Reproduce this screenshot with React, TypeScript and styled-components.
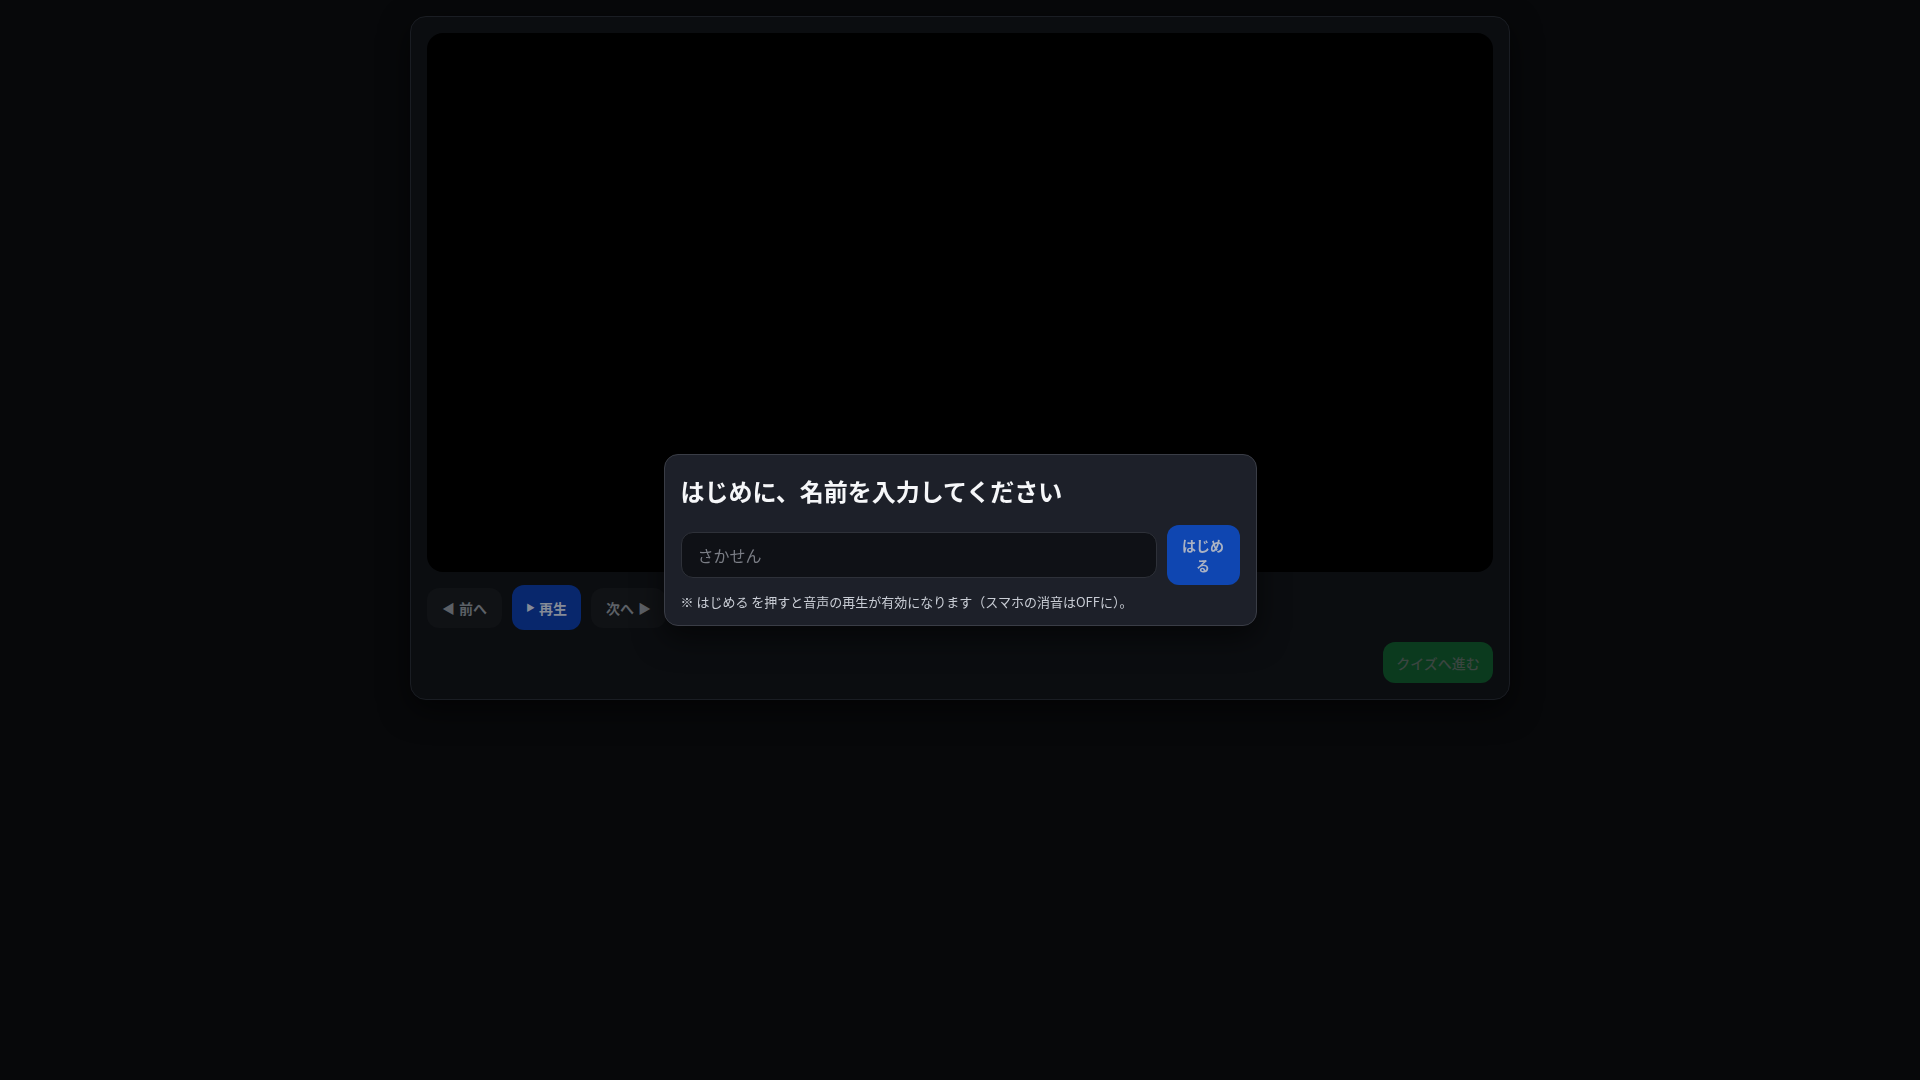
import React, { useState } from 'react';
import styled, { createGlobalStyle } from 'styled-components';

const GlobalStyle = createGlobalStyle`
  html, body {
    margin: 0;
    padding: 0;
    background: #07080a;
    font-family: "Noto Sans CJK JP", "Noto Sans", sans-serif;
  }
  * {
    box-sizing: border-box;
  }
`;

const Page = styled.div`
  min-height: 100vh;
  padding-top: 16px;
`;

const Card = styled.div`
  width: 1100px;
  margin: 0 auto;
  padding: 16px;
  background: #0b0d10;
  border: 1px solid #1a1d23;
  border-radius: 16px;
  box-shadow: 0 10px 30px rgba(0, 0, 0, 0.6);
`;

const Screen = styled.div`
  height: 539px;
  background: #000;
  border-radius: 16px;
`;

const Controls = styled.div`
  display: flex;
  align-items: center;
  gap: 10px;
  margin-top: 13px;
`;

const NavButton = styled.button<{ $primary?: boolean }>`
  height: ${(p) => (p.$primary ? '45px' : '40px')};
  padding: 0 ${(p) => (p.$primary ? '14px' : '15px')};
  border: none;
  border-radius: 12px;
  background: ${(p) => (p.$primary ? '#08276c' : '#101215')};
  color: ${(p) => (p.$primary ? '#858b97' : '#5c6066')};
  font-family: inherit;
  font-size: 14px;
  font-weight: 600;
  display: flex;
  align-items: center;
  gap: 4px;
`;

const Tri = styled.span<{ $small?: boolean }>`
  font-size: ${(p) => (p.$small ? '9px' : '13px')};
  line-height: 1;
`;

const Footer = styled.div`
  display: flex;
  justify-content: flex-end;
  margin-top: 12px;
`;

const QuizButton = styled.button`
  width: 110px;
  height: 41px;
  border: none;
  border-radius: 12px;
  background: #0b3a1e;
  color: #3a4540;
  font-family: inherit;
  font-size: 14px;
  font-weight: 500;
`;

const Overlay = styled.div`
  position: fixed;
  inset: 0;
  display: flex;
  align-items: center;
  justify-content: center;
`;

const Modal = styled.div`
  width: 593px;
  padding: 16px 16px 14px;
  background: #1d2029;
  border: 1px solid #3a3d46;
  border-radius: 14px;
  box-shadow: 0 12px 30px rgba(0, 0, 0, 0.55);
`;

const Title = styled.h2`
  margin: 0;
  color: #f6f7f9;
  font-size: 24px;
  font-weight: 700;
  line-height: 40px;
`;

const Row = styled.div`
  display: flex;
  align-items: center;
  gap: 10px;
  margin-top: 14px;
`;

const NameInput = styled.input`
  flex: 1;
  min-width: 0;
  height: 46px;
  padding: 0 16px;
  background: #0f1116;
  border: 1px solid #2e3139;
  border-radius: 12px;
  color: #e6e8ec;
  font-family: inherit;
  font-size: 16px;
  outline: none;

  &::placeholder {
    color: #7a7d85;
  }
`;

const StartButton = styled.button`
  width: 73px;
  height: 60px;
  padding: 0 14px;
  border: none;
  border-radius: 12px;
  background: #0f46b1;
  color: #aab2c3;
  font-family: inherit;
  font-size: 14px;
  font-weight: 700;
  line-height: 20px;
`;

const Note = styled.p`
  margin: 7px 0 0;
  color: #c9cdd5;
  font-size: 13px;
  line-height: 19px;
`;

export default function App() {
  const [name, setName] = useState('');

  return (
    <>
      <GlobalStyle />
      <Page>
        <Card>
          <Screen />
          <Controls>
            <NavButton>
              <Tri>◀</Tri>前へ
            </NavButton>
            <NavButton $primary>
              <Tri $small>▶</Tri>再生
            </NavButton>
            <NavButton>
              次へ<Tri>▶</Tri>
            </NavButton>
          </Controls>
          <Footer>
            <QuizButton>クイズへ進む</QuizButton>
          </Footer>
        </Card>
      </Page>
      <Overlay>
        <Modal>
          <Title>はじめに、名前を入力してください</Title>
          <Row>
            <NameInput
              placeholder="さかせん"
              value={name}
              onChange={(e) => setName(e.target.value)}
            />
            <StartButton>はじめる</StartButton>
          </Row>
          <Note>※ はじめる を押すと音声の再生が有効になります（スマホの消音はOFFに）。</Note>
        </Modal>
      </Overlay>
    </>
  );
}
